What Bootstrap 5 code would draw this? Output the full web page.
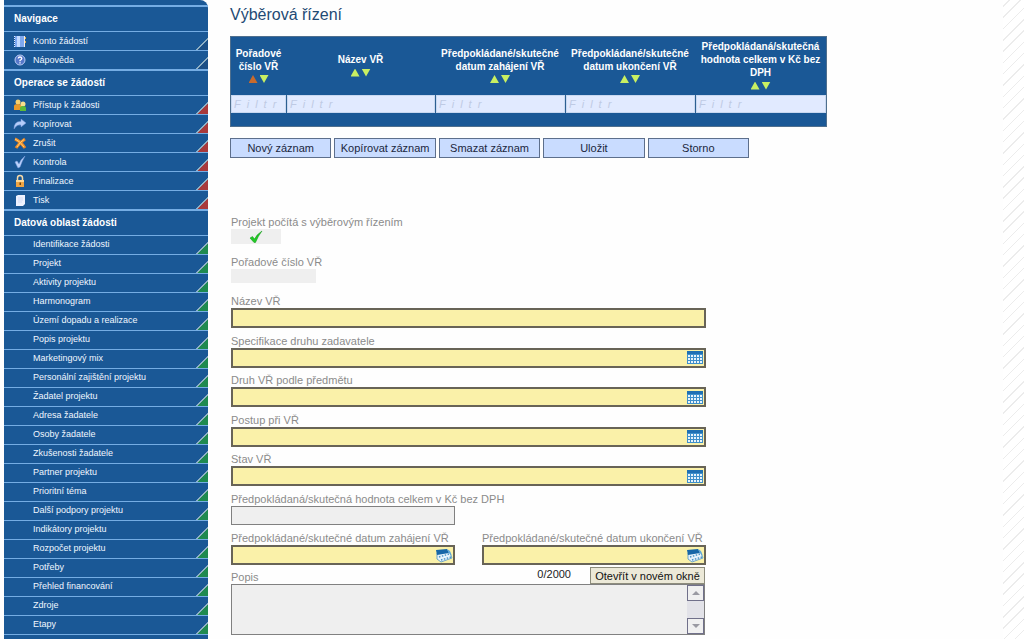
<!DOCTYPE html>
<html lang="cs">
<head>
<meta charset="utf-8">
<meta name="viewport" content="width=device-width, initial-scale=1">
<title>Výběrová řízení</title>
<link href="https://cdn.jsdelivr.net/npm/bootstrap@5.3.0/dist/css/bootstrap.min.css" rel="stylesheet">
<style>
  :root { --blue: #1a5896; --line: #75ade4; --field: #faf1a9; --edge: #686457; }
  body { font-family: "Liberation Sans", Arial, sans-serif; font-size: 11px; line-height: 14px; color: #222; background: #fefefe; }
  button, input, textarea { font: inherit; border-radius: 0; }

  /* side menu */
  .side { width: 204px; margin-left: 4px; background: var(--blue); border-top-right-radius: 8px; padding-top: 5px; }
  .side h2 { font-size: 10px; line-height: 24px; font-weight: 700; color: #fff; margin: 0; padding-left: 10px; border-top: 2px solid var(--line); height: 26px; }
  .side a { --corner: #1b4f86; height: 19px; font-size: 9px; line-height: 17px; color: #f0f7ff; text-decoration: none; border-top: 1px solid var(--line); padding-left: 9px; gap: 6px;
    background: linear-gradient(135deg, transparent 48%, #8fb0c4 48%, #8fb0c4 56%, var(--corner) 56%) right bottom / 12px 12px no-repeat; }
  .ops a { --corner: #a83a3c; }
  .data { border-bottom: 1px solid var(--line); }
  .data a { --corner: #1f8a50; padding-left: 29px; }
  .side svg { width: 14px; height: 14px; }

  .main-area { padding: 5px 0 0 22px; }
  h1 { font-size: 16px; line-height: 20px; color: #1f4a74; margin: 0 0 11px; }
  .hatch { width: 21px; background: repeating-linear-gradient(135deg, #fff 0 4px, #ececec 4px 5px, #fff 5px 8px); }

  /* records grid */
  .records { width: 597px; table-layout: fixed; background: var(--blue); border: 1px solid #4f6f8e; border-collapse: separate; border-spacing: 0; margin-bottom: 11px; }
  .records th { height: 58px; padding: 0; text-align: center; vertical-align: middle; color: #fff; font-size: 10px; line-height: 13px; }
  .records td { padding: 0; height: 18px; }
  .records tbody td + td { border-left: 1px solid #2c5f92; }
  .records tfoot td { height: 13px; }
  .records input { display: block; width: 100%; height: 18px; border: 1px solid #c8d8f0; background: #e1eaff; padding: 0 2px; font-style: italic; letter-spacing: 6px; }
  .records input::placeholder { color: #bfcae4; opacity: 1; }
  .sort { display: flex; justify-content: center; gap: 2px; height: 13px; align-items: center; }
  .sort button { border: 0; padding: 0; width: 9px; height: 8px; background: #c8ef62; clip-path: polygon(50% 0, 100% 100%, 0 100%); }
  .sort button.down { clip-path: polygon(0 0, 100% 0, 50% 100%); }
  .sort button.on { background: #c86a2c; }

  .tools { width: 519px; gap: 3px; margin-bottom: 57px; }
  .tools button { flex: 1 1 0; height: 20px; padding: 0; border: 1px solid #5d6f8c; background: #c9dcff; color: #1b2740; white-space: nowrap; }

  /* form */
  .entry { width: 475px; margin-left: 1px; }
  .fields { min-height: 350px; }
  .fields > div { height: 34px; }
  .entry label { display: block; height: 14px; color: #8b8b8b; white-space: nowrap; }
  .box { height: 20px; border: 2px solid var(--edge); background: var(--field); display: flex; align-items: center; }
  .box input { flex: 1; min-width: 0; height: 16px; border: 0; background: none; padding: 0 3px; }
  .box button { border: 0; padding: 0; background: none; display: flex; width: 18px; height: 15px; }
  .box svg { width: 18px; height: 15px; }
  .flat { background: #efefef; border: 0; height: 14px; padding: 0; display: block; }
  .number { width: 85px; }
  .framed { background: #efefef; border: 1px solid #808080; height: 19px; width: 224px; }
  .tick { width: 50px; height: 15px; }
  .tick input { position: absolute; inset: 0; opacity: 0; width: 100%; height: 100%; margin: 0; }
  .tick svg { width: 14px; height: 14px; }
  .pair { display: flex; justify-content: space-between; }
  .pair > div { width: 224px; }
  .note-head { width: 474px; padding-top: 2px; height: 19px; }
  .note-head label { padding-top: 3px; }
  .note-head span { margin-right: 19px; }
  .open-btn { width: 115px; height: 17px; padding: 0; line-height: 14px; border: 1px solid #8d8c7c; background: #ece9d8; color: #111; white-space: nowrap; }
  .note { width: 474px; height: 51px; border: 1px solid #808080; background: #efefef; }
  .note textarea { border: 0; background: none; resize: none; overflow: hidden; }
  .scroller { width: 17px; background: #e2e2e8; }
  .scroller button { width: 17px; height: 16px; padding: 0; border: 1px solid #70708a; background: #f0f0f0; display: flex; align-items: center; justify-content: center; }
</style>
</head>
<body>
<svg class="d-none">
  <symbol id="i-table" viewBox="0 0 18 15"><path fill="#3f8fcb" d="M1 1h16v13H1z"/><path fill="#1f70b4" d="M1 1h16v3H1z"/><path stroke="#e8f4fb" stroke-width="2" stroke-dasharray="2 1" d="M2 6h14M2 9h14M2 12h14"/></symbol>
  <symbol id="i-date" viewBox="0 0 18 15"><path fill="#e9f4fb" stroke="#4a93c6" stroke-width=".8" d="M2 5l12-2 3 7-11 4-4-3z"/><path fill="#1767a8" d="M1 2l11-1 2 4-12 2z"/><path fill="#5fa9dc" d="M12 1l3 2 2 5-3-3z"/><path stroke="#4a93c6" stroke-width="1.5" stroke-dasharray="1.5 1.5" d="M4 9l10-3M6 12l10-3"/></symbol>
</svg>
<div class="d-flex vh-100 overflow-hidden">
  <nav class="side flex-shrink-0">
    <h2>Navigace</h2>
    <div>
      <a href="#" class="d-flex align-items-center"><svg viewBox="0 0 14 14"><path fill="#7fa9f0" d="M2 2h9v11H2z"/><path fill="#c3dbff" d="M4 2h3v11H4z"/><path fill="#eee" d="M11 2h1v11h-1z"/><path fill="#e8b04a" d="M12 3h1v2h-1zM12 7h1v2h-1z"/><path stroke="#dfeaff" stroke-dasharray="1 1" d="M1.500 2v11"/></svg>Konto žádostí</a>
      <a href="#" class="d-flex align-items-center"><svg viewBox="0 0 14 14"><circle cx="7" cy="7" r="5" fill="#5577c9" stroke="#b9cdf5"/><path fill="none" stroke="#fff" stroke-width="1.300" d="M5.200 5.500q.2-1.500 1.800-1.500t1.800 1.400q0 1-1.800 2v.8M7 9.300v1.200"/></svg>Nápověda</a>
    </div>
    <h2>Operace se žádostí</h2>
    <div class="ops">
      <a href="#" class="d-flex align-items-center"><svg viewBox="0 0 14 14"><circle cx="5" cy="4" r="2.500" fill="#f7cf6b"/><path fill="#e99a2b" d="M1 12V8q0-2 4-2t4 2v4z"/><circle cx="10" cy="6" r="2.500" fill="#f9df8d"/><path fill="#5dbb3a" d="M7 13v-3q0-2 3-2t3 2v3z"/></svg>Přístup k žádosti</a>
      <a href="#" class="d-flex align-items-center"><svg viewBox="0 0 14 14"><path fill="#b5cdfa" stroke="#7d9de0" stroke-width=".5" d="M8 2l5 4-5 4V8Q4 7 1 12 1 4 8 4.500z"/></svg>Kopírovat</a>
      <a href="#" class="d-flex align-items-center"><svg viewBox="0 0 14 14"><path fill="none" stroke="#f08a24" stroke-width="3" d="M2 3q5 2 10 9M12 3Q7 6 3 12"/><path fill="none" stroke="#ffd27a" d="M2 3q5 2 9 8M11 3.500Q7 6 4 11"/></svg>Zrušit</a>
      <a href="#" class="d-flex align-items-center"><svg viewBox="0 0 14 14"><path fill="#bcd2fb" stroke="#7f9ee0" stroke-width=".5" d="M2 7l2-1 2 3q2-5 6-8Q9 6 7 12l-2 1z"/></svg>Kontrola</a>
      <a href="#" class="d-flex align-items-center"><svg viewBox="0 0 14 14"><path fill="none" stroke="#f5d9a8" stroke-width="1.500" d="M4.500 7V4q0-2.500 2.500-2.500T9.500 4v3"/><path fill="#f0a543" d="M3 6h8v7H3z"/><path fill="#ffd894" d="M3 6h8v2H3z"/><path fill="#6d4310" d="M6.500 8.500h1.500v2.500H6.500z"/></svg>Finalizace</a>
      <a href="#" class="d-flex align-items-center"><svg viewBox="0 0 14 14"><path fill="#eef2ff" d="M3 3l2-1h7v9l-2 2H3z"/><path stroke="#d3dcf6" d="M5 5h5M5 7h5M5 9h4"/></svg>Tisk</a>
    </div>
    <h2>Datová oblast žádosti</h2>
    <div class="data">
      <a href="#" class="d-block">Identifikace žádosti</a>
      <a href="#" class="d-block">Projekt</a>
      <a href="#" class="d-block">Aktivity projektu</a>
      <a href="#" class="d-block">Harmonogram</a>
      <a href="#" class="d-block">Území dopadu a realizace</a>
      <a href="#" class="d-block">Popis projektu</a>
      <a href="#" class="d-block">Marketingový mix</a>
      <a href="#" class="d-block">Personální zajištění projektu</a>
      <a href="#" class="d-block">Žadatel projektu</a>
      <a href="#" class="d-block">Adresa žadatele</a>
      <a href="#" class="d-block">Osoby žadatele</a>
      <a href="#" class="d-block">Zkušenosti žadatele</a>
      <a href="#" class="d-block">Partner projektu</a>
      <a href="#" class="d-block">Prioritní téma</a>
      <a href="#" class="d-block">Další podpory projektu</a>
      <a href="#" class="d-block">Indikátory projektu</a>
      <a href="#" class="d-block">Rozpočet projektu</a>
      <a href="#" class="d-block">Potřeby</a>
      <a href="#" class="d-block">Přehled financování</a>
      <a href="#" class="d-block">Zdroje</a>
      <a href="#" class="d-block">Etapy</a>
    </div>
  </nav>

  <main class="main-area flex-grow-1">
    <h1 class="fw-normal">Výběrová řízení</h1>
    <table class="records">
      <colgroup><col style="width:55px"><col style="width:149px"><col style="width:130px"><col style="width:130px"><col></colgroup>
      <thead><tr>
        <th>Pořadové číslo VŘ<span class="sort"><button type="button" class="on" aria-label="Vzestupně"></button><button type="button" class="down" aria-label="Sestupně"></button></span></th>
        <th>Název VŘ<span class="sort"><button type="button" aria-label="Vzestupně"></button><button type="button" class="down" aria-label="Sestupně"></button></span></th>
        <th>Předpokládané/skutečné datum zahájení VŘ<span class="sort"><button type="button" aria-label="Vzestupně"></button><button type="button" class="down" aria-label="Sestupně"></button></span></th>
        <th>Předpokládané/skutečné datum ukončení VŘ<span class="sort"><button type="button" aria-label="Vzestupně"></button><button type="button" class="down" aria-label="Sestupně"></button></span></th>
        <th>Předpokládaná/skutečná hodnota celkem v Kč bez DPH<span class="sort"><button type="button" aria-label="Vzestupně"></button><button type="button" class="down" aria-label="Sestupně"></button></span></th>
      </tr></thead>
      <tbody><tr>
        <td><input type="text" placeholder="Filtr" aria-label="Filtr"></td>
        <td><input type="text" placeholder="Filtr" aria-label="Filtr"></td>
        <td><input type="text" placeholder="Filtr" aria-label="Filtr"></td>
        <td><input type="text" placeholder="Filtr" aria-label="Filtr"></td>
        <td><input type="text" placeholder="Filtr" aria-label="Filtr"></td>
      </tr></tbody>
      <tfoot><tr><td colspan="5"></td></tr></tfoot>
    </table>

    <div class="tools d-flex">
      <button type="button">Nový záznam</button>
      <button type="button">Kopírovat záznam</button>
      <button type="button">Smazat záznam</button>
      <button type="button">Uložit</button>
      <button type="button">Storno</button>
    </div>

    <form class="entry">
      <div class="fields d-flex flex-column justify-content-between">
        <div><label for="f1">Projekt počítá s výběrovým řízením</label>
          <div class="tick flat position-relative d-flex align-items-center justify-content-center"><input type="checkbox" id="f1" checked><svg viewBox="0 0 14 14"><path fill="#22c926" stroke="#109618" stroke-width=".5" d="M1 8l2.500-1.500L5.500 9Q8 4 13 1 9 6 6.500 12.500H5z"/></svg></div></div>
        <div><label for="f2">Pořadové číslo VŘ</label><input type="text" id="f2" class="flat number" disabled></div>
        <div><label for="f3">Název VŘ</label><div class="box"><input type="text" id="f3"></div></div>
        <div><label for="f4">Specifikace druhu zadavatele</label><div class="box"><input type="text" id="f4"><button type="button" aria-label="Vybrat"><svg><use href="#i-table"/></svg></button></div></div>
        <div><label for="f5">Druh VŘ podle předmětu</label><div class="box"><input type="text" id="f5"><button type="button" aria-label="Vybrat"><svg><use href="#i-table"/></svg></button></div></div>
        <div><label for="f6">Postup při VŘ</label><div class="box"><input type="text" id="f6"><button type="button" aria-label="Vybrat"><svg><use href="#i-table"/></svg></button></div></div>
        <div><label for="f7">Stav VŘ</label><div class="box"><input type="text" id="f7"><button type="button" aria-label="Vybrat"><svg><use href="#i-table"/></svg></button></div></div>
        <div><label for="f8">Předpokládaná/skutečná hodnota celkem v Kč bez DPH</label><input type="text" id="f8" class="framed d-block" disabled></div>
        <div class="pair">
          <div><label for="f9">Předpokládané/skutečné datum zahájení VŘ</label><div class="box"><input type="text" id="f9"><button type="button" aria-label="Kalendář"><svg><use href="#i-date"/></svg></button></div></div>
          <div><label for="f10">Předpokládané/skutečné datum ukončení VŘ</label><div class="box"><input type="text" id="f10"><button type="button" aria-label="Kalendář"><svg><use href="#i-date"/></svg></button></div></div>
        </div>
      </div>
      <div class="note-head d-flex align-items-start">
        <label for="f11" class="me-auto">Popis</label>
        <span>0/2000</span>
        <button type="button" class="open-btn">Otevřít v novém okně</button>
      </div>
      <div class="note d-flex">
        <textarea id="f11" class="flex-grow-1" disabled></textarea>
        <div class="scroller d-flex flex-column justify-content-between">
          <button type="button" aria-label="Nahoru"><svg width="8" height="4"><path fill="#9a9aa2" d="M0 4l4-4 4 4z"/></svg></button>
          <button type="button" aria-label="Dolů"><svg width="8" height="4"><path fill="#9a9aa2" d="M0 0h8L4 4z"/></svg></button>
        </div>
      </div>
    </form>
  </main>
  <div class="hatch flex-shrink-0"></div>
</div>
<script src="https://cdn.jsdelivr.net/npm/bootstrap@5.3.0/dist/js/bootstrap.bundle.min.js"></script>
</body>
</html>
